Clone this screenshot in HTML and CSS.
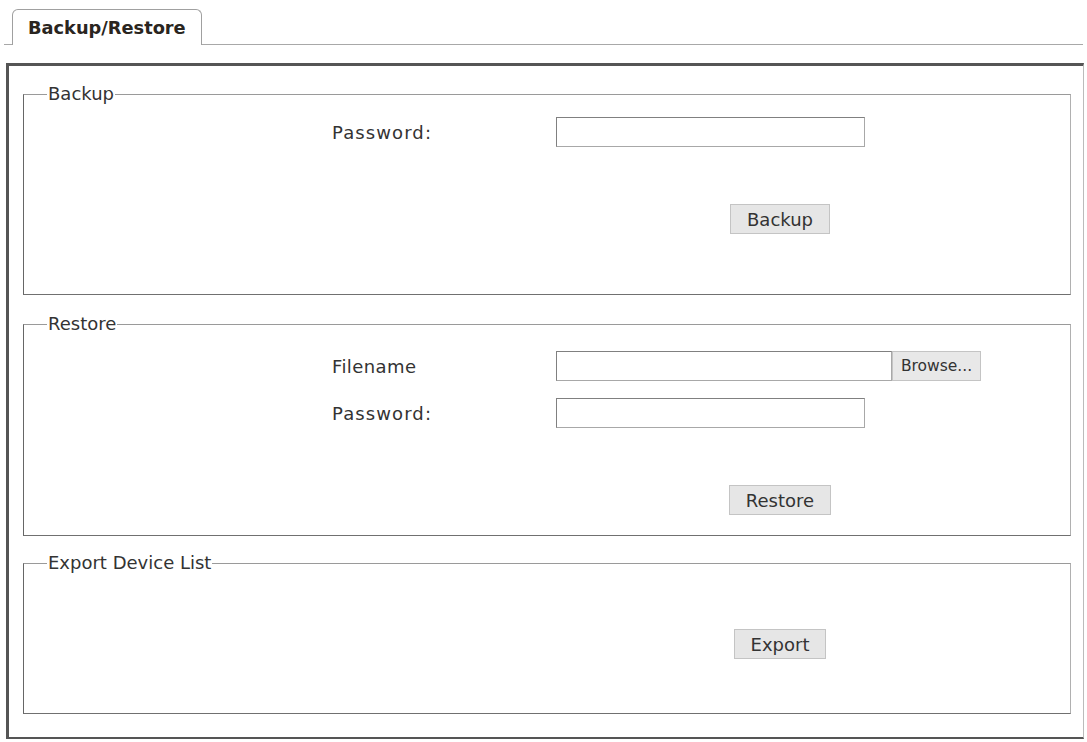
FILE: index.html
```html
<!DOCTYPE html>
<html>
<head>
<meta charset="utf-8">
<link rel="stylesheet" href="styles.css">
</head>
<body>
<div class="tabbar">
  <div class="tab">Backup/Restore</div>
</div>
<div class="panel">
  <fieldset class="group group-backup">
    <legend>Backup</legend>
    <div class="row row-first">
      <span class="label label-wide">Password:</span>
      <input class="field" type="password">
    </div>
    <div class="actions actions-backup">
      <button class="btn">Backup</button>
    </div>
  </fieldset>
  <fieldset class="group group-restore">
    <legend>Restore</legend>
    <div class="row row-first-restore">
      <span class="label">Filename</span>
      <span class="file-wrap"><span class="field field-file"></span><button class="browse">Browse...</button></span>
    </div>
    <div class="row row-second">
      <span class="label label-wide">Password:</span>
      <input class="field" type="password">
    </div>
    <div class="actions actions-restore">
      <button class="btn">Restore</button>
    </div>
  </fieldset>
  <fieldset class="group group-export">
    <legend>Export Device List</legend>
    <div class="actions actions-export">
      <button class="btn">Export</button>
    </div>
  </fieldset>
</div>
</body>
</html>
```

FILE: styles.css
```css
html, body {
  margin: 0;
  padding: 0;
  background: #ffffff;
}
body {
  font-family: "DejaVu Sans", Verdana, sans-serif;
  color: #333333;
  padding-top: 9px;
}
.tabbar {
  margin: 0 4px 0 4px;
  padding-left: 8px;
  border-bottom: 1px solid #a8a8a8;
  height: 36px;
  box-sizing: border-box;
}
.tab {
  width: 190px;
  height: 36px;
  box-sizing: border-box;
  border: 1px solid #a0a0a0;
  border-bottom: none;
  border-radius: 6px 6px 0 0;
  background: #ffffff;
  font-weight: bold;
  font-size: 17.8px;
  line-height: 36px;
  padding-left: 15px;
  color: #2a2520;
  white-space: nowrap;
}
.panel {
  margin: 18px 3px 0 6px;
  border-top: 3px solid #555;
  border-left: 3px solid #555;
  border-bottom: 2px solid #555;
  border-right: 1px solid #bbb;
  padding: 18px 12px 23px 14px;
}
.group {
  margin: 0;
  padding: 0;
  border: 1px solid #999;
  border-left-color: #666;
  border-bottom-color: #707070;
  border-top-color: #9a9a9a;
  border-right-color: #b0b0b0;
}
.group legend {
  margin-left: 23px;
  padding: 0 1px;
  font-size: 18px;
  line-height: 20px;
  color: #333;
}
.group-restore {
  margin-top: 19px;
}
.group-export {
  margin-top: 17px;
}
.row {
  display: flex;
  align-items: center;
  padding-left: 308px;
  height: 30px;
}
.row-first {
  margin-top: 13px;
}
.row-first-restore {
  margin-top: 17px;
}
.row-second {
  margin-top: 17px;
}
.label {
  width: 224px;
  font-size: 18px;
  letter-spacing: 0.4px;
}
.label-wide {
  letter-spacing: 1.1px;
}
.field {
  display: block;
  width: 309px;
  height: 30px;
  box-sizing: border-box;
  border: 1px solid #a8a8a8;
  border-top-color: #808080;
  border-left-color: #808080;
  background: #fff;
  margin: 0;
  padding: 0;
}
.file-wrap {
  display: flex;
}
.field-file {
  width: 336px;
}
.browse {
  width: 89px;
  height: 30px;
  margin: 0;
  box-sizing: border-box;
  border: 1px solid #c4c4c4;
  background: #e8e8e8;
  font-family: "DejaVu Sans", Verdana, sans-serif;
  font-size: 15.5px;
  color: #333;
  padding: 0;
}
.actions {
  margin-left: 532px;
  width: 448px;
  display: flex;
  justify-content: center;
}
.actions-backup {
  margin-top: 57px;
  margin-bottom: 60px;
}
.actions-restore {
  margin-top: 57px;
  margin-bottom: 20px;
}
.actions-export {
  margin-top: 56px;
  margin-bottom: 54px;
}
.btn {
  height: 30px;
  box-sizing: border-box;
  padding: 0 16px;
  border: 1px solid #c4c4c4;
  background: #e6e6e6;
  font-family: "DejaVu Sans", Verdana, sans-serif;
  font-size: 18px;
  color: #333;
  margin: 0;
}
```
